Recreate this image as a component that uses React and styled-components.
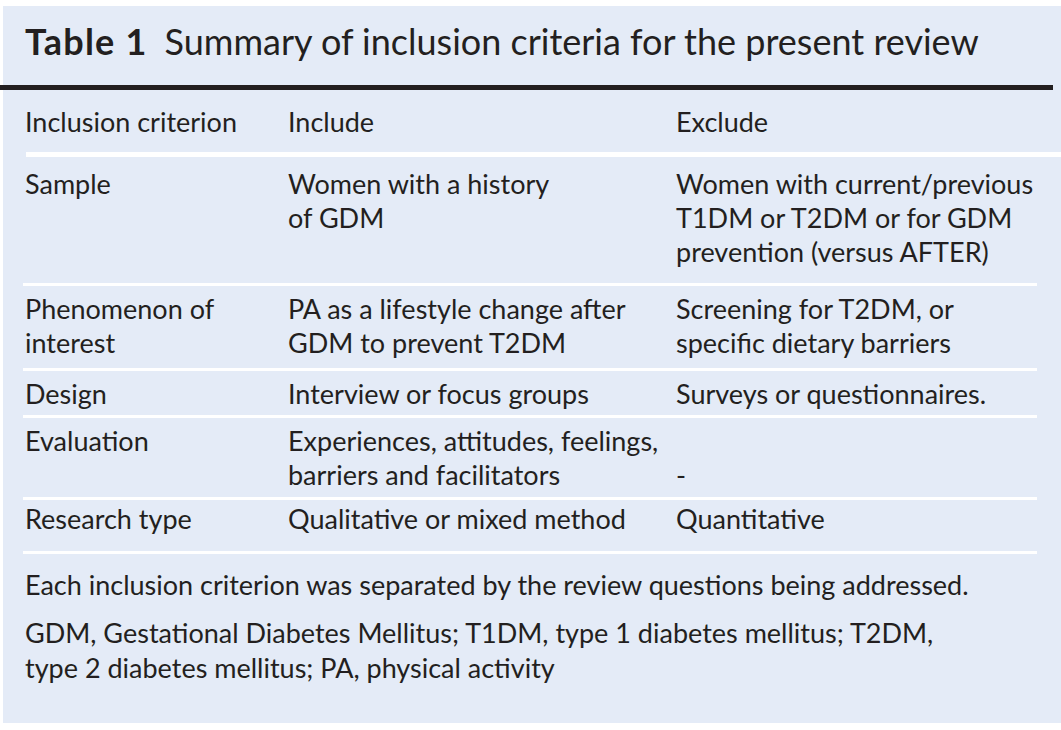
import React from "react";
import styled, { createGlobalStyle } from "styled-components";

const GlobalStyle = createGlobalStyle`
  body {
    margin: 0;
    background: #ffffff;
    font-family: Lato, "Liberation Sans", sans-serif;
    color: #231f20;
  }
`;

const Page = styled.div`
  padding: 6px 0 0 3px;
`;

const Panel = styled.div`
  background: #e4ebf7;
  height: 717px;
  width: 1058px;
  box-sizing: border-box;
`;

const Title = styled.h1`
  margin: 0;
  padding: 17px 0 0 22px;
  font-size: 36px;
  line-height: 36px;
  font-weight: 400;
  white-space: nowrap;
  b {
    font-weight: 700;
    letter-spacing: 1.2px;
    margin-right: 17px;
  }
`;

const ThickRule = styled.div`
  height: 5px;
  width: 1053px;
  margin: 26px 0 0 -3px;
  background: #231f20;
`;

const Grid = styled.div`
  display: grid;
  grid-template-columns: 263px 388px 1fr;
  margin-left: 20px;
  width: 1014px;
  padding: ${(p) => p.$pad || "6px 0 6px 2px"};
  box-sizing: border-box;
  font-size: 27px;
  line-height: 34px;
  border-bottom: ${(p) => (p.$plain ? "none" : "3px solid #ffffff")};
`;

const HeaderRule = styled.div`
  height: 5px;
  margin-left: 23px;
  background: #ffffff;
`;

const Cell = styled.div`
  align-self: ${(p) => (p.$bottom ? "end" : "start")};
  white-space: nowrap;
`;

const Notes = styled.div`
  padding: 14px 0 0 22px;
  font-size: 27px;
`;

const Note = styled.p`
  margin: 0 0 ${(p) => p.$gap || "0px"} 0;
  line-height: ${(p) => p.$lh || "34px"};
`;

const rows = [
  {
    label: ["Sample"],
    include: ["Women with a history", "of GDM"],
    exclude: ["Women with current/previous", "T1DM or T2DM or for GDM", "prevention (versus AFTER)"],
    pad: "10px 0 14px 2px",
  },
  {
    label: ["Phenomenon of", "interest"],
    include: ["PA as a lifestyle change after", "GDM to prevent T2DM"],
    exclude: ["Screening for T2DM, or", "specific dietary barriers"],
    pad: "6px 0 8px 2px",
  },
  {
    label: ["Design"],
    include: ["Interview or focus groups"],
    exclude: ["Surveys or questionnaires."],
    pad: "6px 0 4px 2px",
  },
  {
    label: ["Evaluation"],
    include: ["Experiences, attitudes, feelings,", "barriers and facilitators"],
    exclude: ["-"],
    bottom: true,
    pad: "6px 0 5px 2px",
  },
  {
    label: ["Research type"],
    include: ["Qualitative or mixed method"],
    exclude: ["Quantitative"],
    pad: "2px 0 15px 2px",
  },
];

const Lines = ({ items }) =>
  items.map((t, i) => (
    <React.Fragment key={i}>
      {i > 0 && <br />}
      {t}
    </React.Fragment>
  ));

export default function App() {
  return (
    <>
      <GlobalStyle />
      <Page>
        <Panel>
          <Title>
            <b>Table 1</b>Summary of inclusion criteria for the present review
          </Title>
          <ThickRule />
          <Grid $plain $pad="15px 0 13px 2px">
            <Cell>Inclusion criterion</Cell>
            <Cell>Include</Cell>
            <Cell>Exclude</Cell>
          </Grid>
          <HeaderRule />
          {rows.map((r) => (
            <Grid key={r.label[0]} $pad={r.pad}>
              <Cell>
                <Lines items={r.label} />
              </Cell>
              <Cell>
                <Lines items={r.include} />
              </Cell>
              <Cell $bottom={r.bottom}>
                <Lines items={r.exclude} />
              </Cell>
            </Grid>
          ))}
          <Notes>
            <Note $gap="13px">
              Each inclusion criterion was separated by the review questions being addressed.
            </Note>
            <Note $lh="35px">
              GDM, Gestational Diabetes Mellitus; T1DM, type 1 diabetes mellitus; T2DM,
              <br />
              type 2 diabetes mellitus; PA, physical activity
            </Note>
          </Notes>
        </Panel>
      </Page>
    </>
  );
}
